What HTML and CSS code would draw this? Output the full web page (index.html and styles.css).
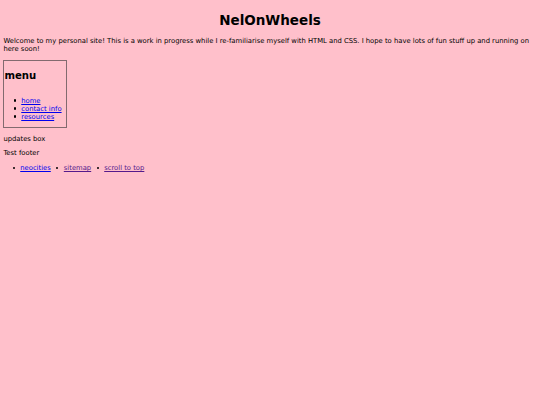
FILE: index.html
```html
<!DOCTYPE html>
<html lang="en">
<head>
<meta charset="utf-8">
<title>NelOnWheels</title>
<link rel="stylesheet" href="styles.css">
</head>
<body>
<h1 class="title">NelOnWheels</h1>
<p class="intro">Welcome to my personal site! This is a work in progress while I re-familiarise myself with HTML and CSS. I hope to have lots of fun stuff up and running on here soon!</p>
<nav class="menu">
  <h2 class="menu-title">menu</h2>
  <ul class="menu-list">
    <li class="item"><a class="link" href="#">home</a></li>
    <li class="item"><a class="link" href="#">contact info</a></li>
    <li class="item"><a class="link" href="#">resources</a></li>
  </ul>
</nav>
<p class="updates">updates box</p>
<footer class="footer">
  <p class="footer-text">Test footer</p>
  <ul class="footer-list">
    <li class="item"><a class="link" href="#">neocities</a></li>
    <li class="item"><a class="link visited" href="#">sitemap</a></li>
    <li class="item"><a class="link visited" href="#">scroll to top</a></li>
  </ul>
</footer>
</body>
</html>
```

FILE: styles.css
```css
html {
  background: #ffc0cb;
}

body {
  margin: 3.375px;
  font-family: "DejaVu Sans", Verdana, sans-serif;
  font-size: 6.8px;
  line-height: 8px;
  color: #000;
  background: #ffc0cb;
}

.title {
  font-size: 13.5px;
  line-height: 16px;
  margin: 9.05px 0;
  text-align: center;
}

.intro,
.updates,
.footer-text {
  margin: 6.75px 0;
}

.menu {
  width: 62px;
  border: 1px solid #826a6f;
}

.menu-title {
  font-size: 10.125px;
  line-height: 11.8px;
  margin: 9.2px 0 8.4px;
}

.menu-list,
.footer-list {
  list-style: none;
  padding-left: 16.875px;
}

.menu-list {
  margin: 14.6px 0 6.2px;
}

.item::before {
  content: "";
  display: inline-block;
  width: 2.2px;
  height: 2.2px;
  border-radius: 50%;
  background: #000;
  margin-left: -7.6px;
  margin-right: 5.4px;
  vertical-align: 1.3px;
}

.link {
  color: #0000ee;
}

.link.visited {
  color: #551a8b;
}

.footer-list {
  display: flex;
  gap: 13px;
  margin: 6.75px 0;
}
```
